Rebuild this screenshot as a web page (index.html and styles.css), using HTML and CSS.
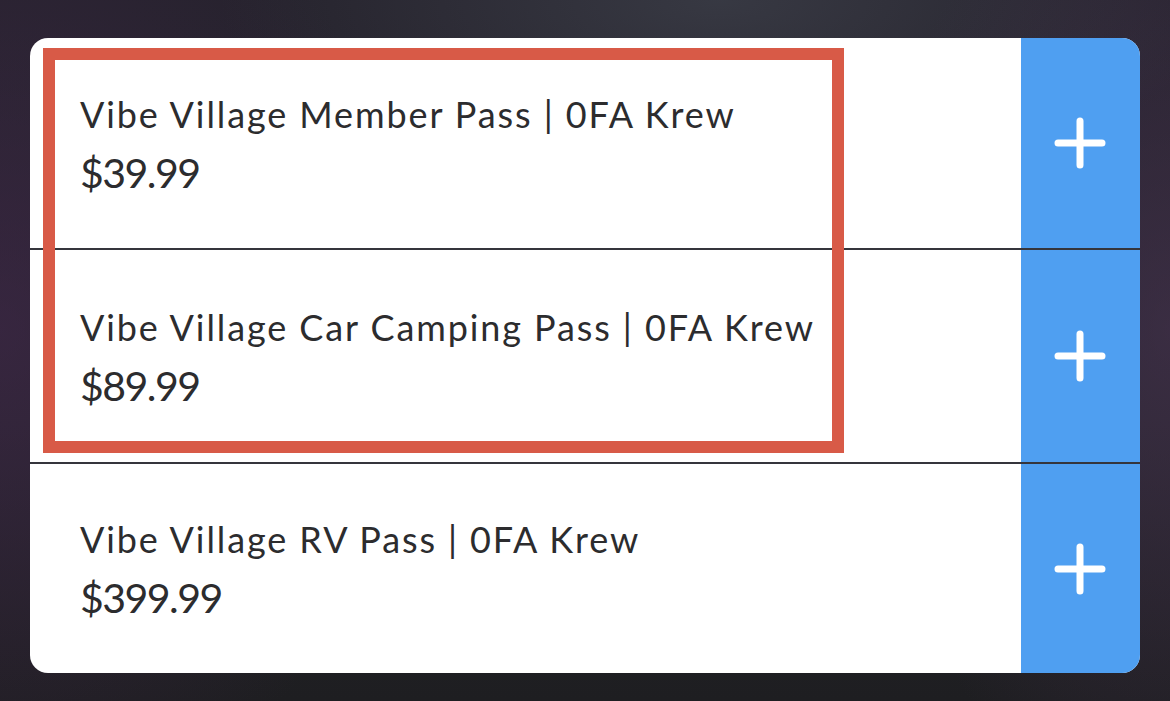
FILE: index.html
```html
<!DOCTYPE html>
<html>
<head>
<meta charset="utf-8">
<link rel="stylesheet" href="styles.css">
</head>
<body>
<div class="card">
  <div class="row row-1">
    <div class="info">
      <div class="title">Vibe Village Member Pass | 0FA Krew</div>
      <div class="price">$39.99</div>
    </div>
    <div class="add"><svg viewBox="0 0 52 52" width="52" height="52"><path d="M26 4V48M4 26H48" stroke="#fff" stroke-width="7" stroke-linecap="round" fill="none"/></svg></div>
  </div>
  <div class="row row-2">
    <div class="info">
      <div class="title">Vibe Village Car Camping Pass | 0FA Krew</div>
      <div class="price">$89.99</div>
    </div>
    <div class="add"><svg viewBox="0 0 52 52" width="52" height="52"><path d="M26 4V48M4 26H48" stroke="#fff" stroke-width="7" stroke-linecap="round" fill="none"/></svg></div>
  </div>
  <div class="row row-3">
    <div class="info">
      <div class="title">Vibe Village RV Pass | 0FA Krew</div>
      <div class="price">$399.99</div>
    </div>
    <div class="add"><svg viewBox="0 0 52 52" width="52" height="52"><path d="M26 4V48M4 26H48" stroke="#fff" stroke-width="7" stroke-linecap="round" fill="none"/></svg></div>
  </div>
  <div class="highlight"></div>
</div>
</body>
</html>
```

FILE: styles.css
```css
html, body {
  margin: 0;
  height: 100%;
}
body {
  width: 1170px;
  height: 701px;
  box-sizing: border-box;
  padding: 38px 30px 0 30px;
  background:
    radial-gradient(ellipse 420px 500px at 0px 330px, rgba(70, 40, 80, 0.55), rgba(70, 40, 80, 0) 100%),
    radial-gradient(ellipse 300px 500px at 1170px 330px, rgba(80, 55, 90, 0.5), rgba(80, 55, 90, 0) 100%),
    radial-gradient(ellipse 500px 200px at 720px 0px, rgba(70, 75, 85, 0.55), rgba(70, 75, 85, 0) 100%),
    linear-gradient(180deg, #25222c 0%, #24232a 60%, #1e1e21 100%);
  font-family: "Lato", "Noto Sans", sans-serif;
  overflow: hidden;
}
.card {
  position: relative;
  width: 1110px;
  height: 635px;
  background: #ffffff;
  border-radius: 18px;
  overflow: hidden;
  display: flex;
  flex-direction: column;
}
.row {
  display: flex;
  box-sizing: border-box;
  border-bottom: 2px solid rgba(18, 18, 26, 0.85);
}
.row-1 {
  height: 212px;
}
.row-2 {
  height: 214px;
}
.row-3 {
  flex: 1;
  border-bottom: none;
}
.info {
  flex: 1;
  display: flex;
  flex-direction: column;
  justify-content: center;
  padding-left: 50px;
  padding-top: 3px;
  color: #2c2c2e;
}
.title {
  font-size: 36px;
  line-height: 44px;
  letter-spacing: 1.9px;
}
.price {
  margin-top: 12px;
  font-size: 41px;
  line-height: 50px;
  letter-spacing: -1.5px;
}
.add {
  width: 119px;
  background: #4f9ff1;
  display: flex;
  align-items: center;
  justify-content: center;
}
.add svg {
  display: block;
  margin-left: -1px;
}
.highlight {
  position: absolute;
  left: 13px;
  top: 10px;
  width: 801px;
  height: 405px;
  box-sizing: border-box;
  border: 12px solid #d85a47;
}
```
